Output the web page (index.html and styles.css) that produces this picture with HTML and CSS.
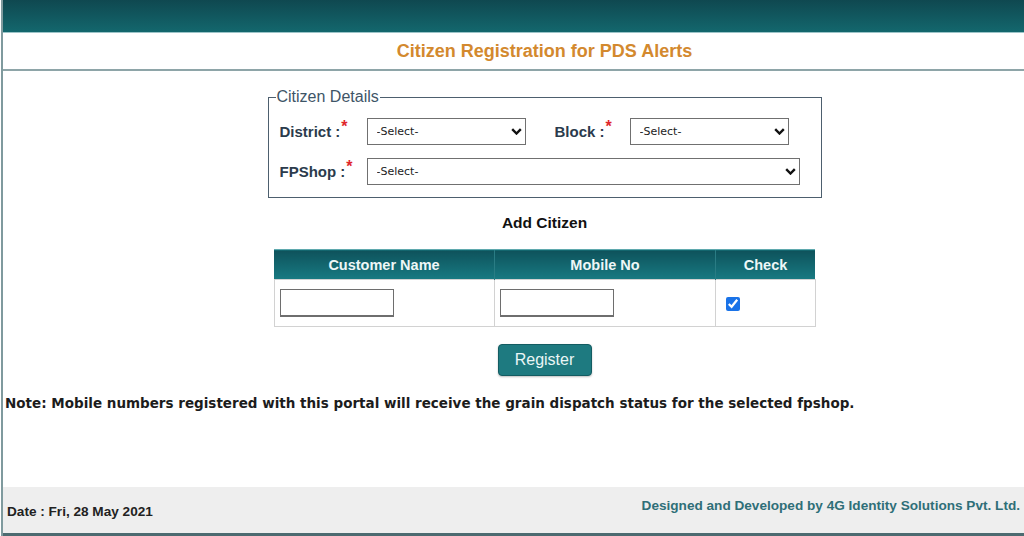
FILE: index.html
```html
<!DOCTYPE html>
<html lang="en">
<head>
<meta charset="utf-8">
<title>Citizen Registration for PDS Alerts</title>
<link rel="stylesheet" href="styles.css">
</head>
<body>
<div class="page">
  <div class="topbar"></div>
  <div class="titlebar"><h1 class="title">Citizen Registration for PDS Alerts</h1></div>
  <div class="main">
    <fieldset class="details">
      <legend class="legend">Citizen Details</legend>
      <div class="row">
        <label class="lbl">District :<span class="req">*</span></label>
        <div class="sel sel-sm">
          <select><option>-Select-</option></select>
          <svg class="chev" viewBox="0 0 11 7" width="11" height="7"><path d="M1.2 1.2 L5.5 5.5 L9.8 1.2" fill="none" stroke="#111" stroke-width="2.4"/></svg>
        </div>
        <label class="lbl lbl-block">Block :<span class="req">*</span></label>
        <div class="sel sel-sm">
          <select><option>-Select-</option></select>
          <svg class="chev" viewBox="0 0 11 7" width="11" height="7"><path d="M1.2 1.2 L5.5 5.5 L9.8 1.2" fill="none" stroke="#111" stroke-width="2.4"/></svg>
        </div>
      </div>
      <div class="row">
        <label class="lbl">FPShop :<span class="req">*</span></label>
        <div class="sel sel-lg">
          <select><option>-Select-</option></select>
          <svg class="chev" viewBox="0 0 11 7" width="11" height="7"><path d="M1.2 1.2 L5.5 5.5 L9.8 1.2" fill="none" stroke="#111" stroke-width="2.4"/></svg>
        </div>
      </div>
    </fieldset>
    <div class="subhead">Add Citizen</div>
    <table class="grid">
      <thead>
        <tr><th class="c1">Customer Name</th><th class="c2">Mobile No</th><th class="c3">Check</th></tr>
      </thead>
      <tbody>
        <tr>
          <td><input class="txt" type="text"></td>
          <td><input class="txt" type="text"></td>
          <td><input class="chk" type="checkbox" checked></td>
        </tr>
      </tbody>
    </table>
    <button class="btn" type="button">Register</button>
  </div>
  <p class="note">Note: Mobile numbers registered with this portal will receive the grain dispatch status for the selected fpshop.</p>
  <div class="footer">
    <span class="date">Date : Fri, 28 May 2021</span>
    <span class="credit">Designed and Developed by 4G Identity Solutions Pvt. Ltd.</span>
  </div>
</div>
</body>
</html>
```
FILE: styles.css
```css
html, body {
  margin: 0;
  padding: 0;
  background: #ffffff;
  overflow: hidden;
}
body {
  font-family: "Liberation Sans", Arial, sans-serif;
}
.page {
  margin-left: 1px;
  border-left: 2px solid #7f9a9e;
  height: 536px;
  display: flex;
  flex-direction: column;
}
.topbar {
  height: 32px;
  background: linear-gradient(#0f4850, #13676d);
  border-bottom: 1px solid #9cc4c8;
}
.titlebar {
  height: 36px;
  border-bottom: 2px solid #8ea5a8;
  display: flex;
  align-items: center;
  justify-content: center;
  padding-left: 62px;
}
.title {
  margin: 0;
  font-size: 18px;
  font-weight: bold;
  color: #d3892e;
}
.main {
  padding-left: 62px;
  display: flex;
  flex-direction: column;
  align-items: center;
}
.details {
  margin: 17px 0 0 0;
  width: 554px;
  box-sizing: border-box;
  border: 1px solid #4d5f6e;
  padding: 4px 20px 12px 11px;
}
.legend {
  padding: 0 1px;
  margin-left: -4px;
  font-size: 16px;
  color: #3e5567;
}
.row {
  display: flex;
  align-items: center;
  height: 27px;
  margin-top: 13px;
}
.row:first-of-type {
  margin-top: 8px;
}
.lbl {
  width: 87px;
  font-size: 15px;
  font-weight: bold;
  color: #2b3b4c;
}
.lbl-block {
  width: 75px;
  margin-left: 29px;
}
.req {
  color: #e0262a;
  font-size: 16px;
  position: relative;
  top: -5px;
  margin-left: 1px;
}
.sel {
  position: relative;
  height: 27px;
}
.sel-sm { width: 159px; }
.sel-lg { width: 433px; }
.sel select {
  appearance: none;
  -webkit-appearance: none;
  width: 100%;
  height: 100%;
  box-sizing: border-box;
  border: 1px solid #707070;
  border-radius: 0;
  background: #fff;
  font-family: "DejaVu Sans", Verdana, sans-serif;
  font-size: 11px;
  color: #222;
  padding: 0 0 0 9px;
}
.chev {
  position: absolute;
  right: 4px;
  top: 10px;
  pointer-events: none;
}
.subhead {
  margin-top: 16px;
  font-size: 15.5px;
  font-weight: bold;
  color: #111;
}
.grid {
  margin-top: 17px;
  border-collapse: collapse;
  width: 539px;
  table-layout: fixed;
}
.grid th {
  height: 29px;
  padding: 0;
  background: linear-gradient(#0e525b, #187a82);
  color: #eef7f7;
  font-size: 14.5px;
  font-weight: bold;
  border-left: 1px solid #2a7c84;
  border-top: 1px solid #5fa9ae;
}
.grid th:first-child { border-left: none; }
.grid .c1 { width: 220px; }
.grid .c2 { width: 220px; }
.grid .c3 { width: 99px; }
.grid td {
  height: 46px;
  padding: 0 0 0 5px;
  border: 1px solid #d2d2d2;
  vertical-align: middle;
}
.txt {
  width: 114px;
  height: 28px;
  box-sizing: border-box;
  border: 1px solid #6e6e6e;
  border-width: 1px 1px 2px 1px;
  padding: 0;
  margin: 0;
}
.chk {
  width: 14px;
  height: 14px;
  margin: 0 0 0 5px;
  accent-color: #1a73e8;
  vertical-align: middle;
}
.btn {
  margin-top: 17px;
  width: 94px;
  height: 32px;
  background: #1e7a80;
  border: 1px solid #135c62;
  border-radius: 4px;
  color: #eaf6f6;
  font-family: "Liberation Sans", Arial, sans-serif;
  font-size: 16px;
  box-shadow: 0 1px 2px rgba(0,0,0,0.25);
}
.note {
  margin: 19px 0 0 2px;
  font-family: "DejaVu Sans", Verdana, sans-serif;
  font-size: 13.5px;
  font-weight: bold;
  color: #1c1c1c;
}
.footer {
  margin-top: auto;
  height: 46px;
  background: #eeeeee;
  border-bottom: 3px solid #4c6a70;
  display: flex;
  justify-content: space-between;
  padding: 0 4px 0 4px;
}
.date {
  align-self: flex-end;
  margin-bottom: 14px;
  font-size: 13.6px;
  font-weight: bold;
  color: #222;
}
.credit {
  align-self: center;
  margin-top: -10px;
  font-size: 13.6px;
  font-weight: bold;
  color: #2f6f78;
}
```
